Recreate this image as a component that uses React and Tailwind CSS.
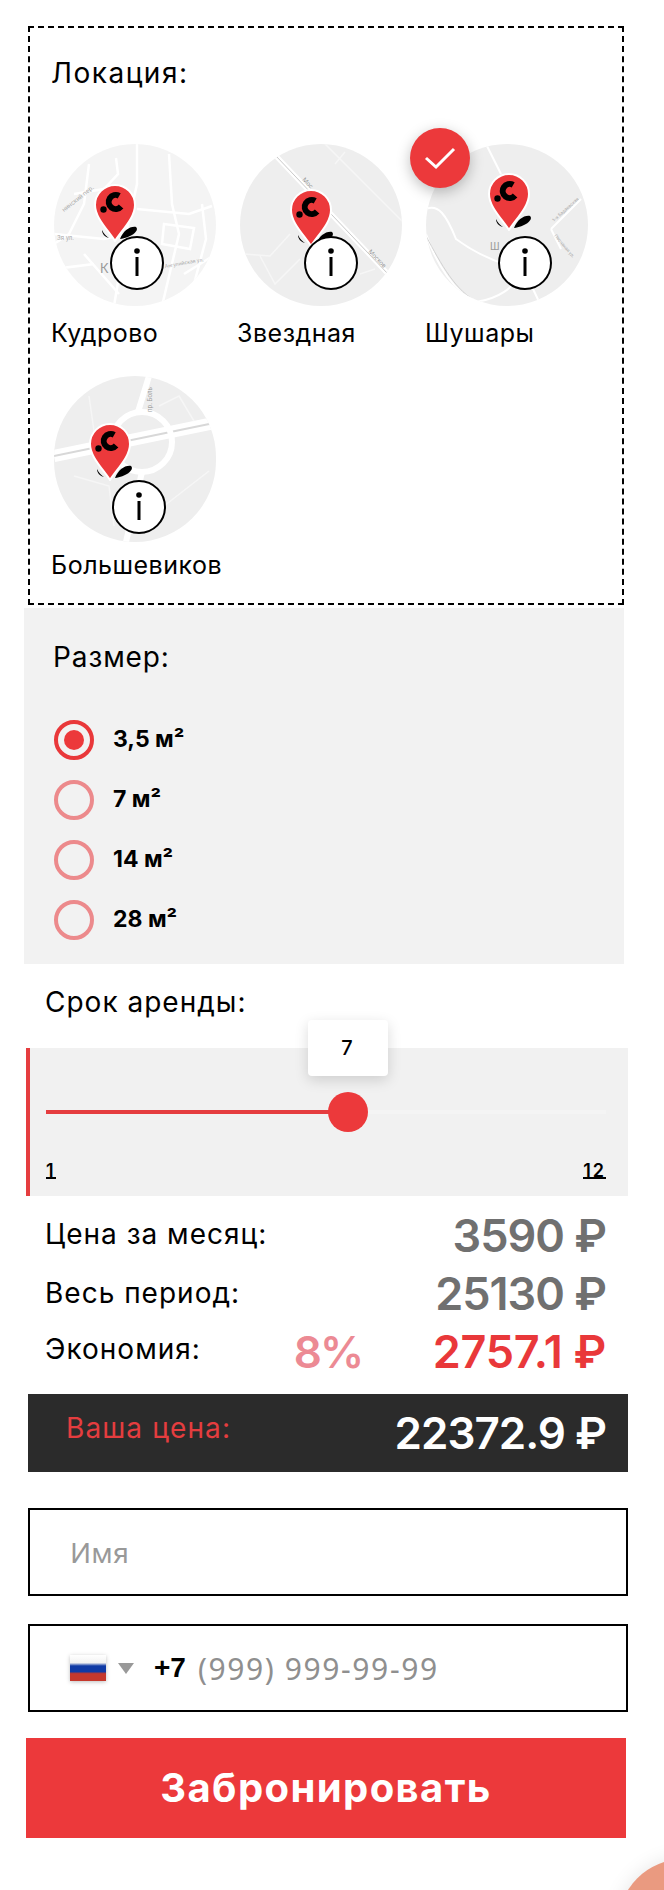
const RED = '#ec393b'

function Pin({ className }) {
  return (
    <svg className={className} width="46" height="58" viewBox="0 0 46 58" fill="none">
      <path d="M26 55C29 47 36 42 42 43C46 47 36 54 26 55Z" fill="#000" />
      <path d="M8 46C10 50 12 52 15 54C11 53 8 50 8 46Z" fill="#000" />
      <path d="M21 1C10 1 1 10 1 21C1 34 14 46 21 57C28 46 41 34 41 21C41 10 32 1 21 1Z" fill={RED} stroke="#fff" strokeWidth="2" />
      <circle cx="9.5" cy="25.5" r="3.2" fill="#000" />
      <path d="M27.1 22.5A7 7 0 1 1 25.2 11.9" stroke="#000" strokeWidth="6" />
    </svg>
  )
}

function InfoBadge({ className }) {
  return (
    <svg className={className} width="54" height="54" viewBox="0 0 54 54">
      <circle cx="27" cy="27" r="26" fill="#fff" stroke="#000" strokeWidth="2" />
      <circle cx="27" cy="15" r="2.8" fill="#000" />
      <rect x="25.5" y="21" width="3" height="19" fill="#000" />
    </svg>
  )
}

function MapKudrovo() {
  return (
    <svg className="w-full h-full" viewBox="0 0 162 162" fill="none">
      <rect width="162" height="162" fill="#f4f4f4" />
      <g stroke="#fff" strokeWidth="2.5">
        <path d="M83 0V40L72 90L60 162" />
        <path d="M115 10L118 60L125 90L108 162" />
        <path d="M35 20L30 60L15 90L0 100" />
        <path d="M62 14L64 30L50 45L20 50" />
        <path d="M83 65L135 70L158 62" />
        <path d="M110 80L140 84L136 105L108 100Z" />
        <path d="M0 90L50 95L72 90" />
        <path d="M30 110L65 150" />
        <path d="M130 130L162 110" />
        <path d="M0 125L40 120" />
        <path d="M148 60L152 95L140 140" />
      </g>
      <text x="10" y="68" fontSize="6" fill="#aaa" fontFamily="Inter, sans-serif" transform="rotate(-38 10 68)">нинский пер.</text>
      <text x="3" y="96" fontSize="6" fill="#aaa" fontFamily="Inter, sans-serif">Зя ул.</text>
      <text x="46" y="129" fontSize="13" fill="#999" fontFamily="Inter, sans-serif">К</text>
      <text x="111" y="124" fontSize="5" fill="#aaa" fontFamily="Inter, sans-serif" transform="rotate(-10 111 124)">Ангулийская ул.</text>
    </svg>
  )
}

function MapZvezdnaya() {
  return (
    <svg className="w-full h-full" viewBox="0 0 162 162" fill="none">
      <rect width="162" height="162" fill="#eeeeee" />
      <path d="M36 12L148 130" stroke="#fff" strokeWidth="5" />
      <path d="M36 12L148 130" stroke="#c9c9c9" strokeWidth="1" />
      <g stroke="#f6f6f6" strokeWidth="1.5">
        <path d="M85 0L165 80" />
        <path d="M105 8L95 20" />
        <path d="M5 110L30 112L50 90" />
        <path d="M20 112L35 140L60 115" />
        <path d="M120 130L135 125" />
      </g>
      <text x="62" y="36" fontSize="6" fill="#999" fontFamily="Inter, sans-serif" transform="rotate(46 62 36)">Мос</text>
      <text x="128" y="108" fontSize="6" fill="#999" fontFamily="Inter, sans-serif" transform="rotate(46 128 108)">Москов</text>
    </svg>
  )
}

function MapShushary() {
  return (
    <svg className="w-full h-full" viewBox="0 0 162 162" fill="none">
      <rect width="162" height="162" fill="#eeeeee" />
      <path d="M0 65C12 60 20 70 30 95C50 110 75 120 95 125C90 145 70 155 50 158C30 150 10 120 0 90" stroke="#fff" strokeWidth="2" />
      <path d="M0 92C15 120 30 148 52 158" stroke="#d2d2d2" strokeWidth="1" />
      <path d="M60 0L75 30M125 85L155 55M125 85L135 105M100 130L115 162" stroke="#fff" strokeWidth="2" />
      <text x="64" y="106" fontSize="10" fill="#999" fontFamily="Inter, sans-serif">Ш</text>
      <text x="128" y="78" fontSize="4.5" fill="#aaa" fontFamily="Inter, sans-serif" transform="rotate(-42 128 78)">1-я Бадаевская</text>
      <text x="128" y="92" fontSize="4.5" fill="#aaa" fontFamily="Inter, sans-serif" transform="rotate(50 128 92)">Песчаная ул.</text>
    </svg>
  )
}

function MapBolshevikov() {
  return (
    <svg className="w-full h-full" viewBox="0 0 162 166" fill="none">
      <rect width="162" height="166" fill="#eeeeee" />
      <path d="M0 80L160 47" stroke="#fff" strokeWidth="12" />
      <path d="M0 80L160 47" stroke="#d8d8d8" strokeWidth="2" />
      <circle cx="88" cy="66" r="30" stroke="#fff" strokeWidth="6" />
      <path d="M95 0L84 36M88 96L72 166" stroke="#fff" strokeWidth="6" />
      <path d="M35 20L40 55M20 100L55 110L60 150M110 130L155 95M105 30L125 20L140 45" stroke="#f6f6f6" strokeWidth="1.5" />
      <text x="98" y="36" fontSize="6" fill="#999" fontFamily="Inter, sans-serif" transform="rotate(-90 98 36)">пр. Боль</text>
    </svg>
  )
}

const locations = [
  { name: 'Кудрово', map: <MapKudrovo />, pin: 'left-[40px] top-[40px]', info: 'left-[56px] top-[92px]', label: 'ml-0' },
  { name: 'Звездная', map: <MapZvezdnaya />, pin: 'left-[50px] top-[45px]', info: 'left-[64px] top-[92px]', label: 'ml-0' },
  { name: 'Шушары', map: <MapShushary />, pin: 'left-[62px] top-[29px]', info: 'left-[72px] top-[92px]', label: 'ml-[2px]', check: true },
  { name: 'Большевиков', map: <MapBolshevikov />, pin: 'left-[35px] top-[47px]', info: 'left-[58px] top-[104px]', label: 'ml-0' },
]

function Location({ item, last }) {
  return (
    <div className="h-[232px]">
      <div className={`relative ml-[3px] w-[162px] ${last ? 'h-[166px]' : 'h-[162px]'}`}>
        <div className="w-full h-full rounded-full overflow-hidden">{item.map}</div>
        <Pin className={`absolute ${item.pin}`} />
        <InfoBadge className={`absolute ${item.info}`} />
        {item.check && (
          <div className="absolute -left-[16px] -top-[16px] w-[60px] h-[60px] rounded-full bg-[#ec393b] shadow-[0_4px_14px_rgba(0,0,0,0.25)] flex items-center justify-center">
            <svg width="32" height="24" viewBox="0 0 32 24" fill="none">
              <path d="M2 12L12 21L30 3" stroke="#fff" strokeWidth="3" />
            </svg>
          </div>
        )}
      </div>
      <div className={`${last ? 'mt-[8px]' : 'mt-[12px]'} ${item.label} text-[25px] leading-[30px] tracking-[0.5px] text-black`}>{item.name}</div>
    </div>
  )
}

function Radio({ label, checked }) {
  return (
    <div className="flex items-center h-[60px]">
      <div className={`w-[40px] h-[40px] rounded-full border-[4px] flex items-center justify-center ${checked ? 'border-[#e9383a]' : 'border-[#ec8a8c]'}`}>
        {checked && <div className="w-[20px] h-[20px] rounded-full bg-[#ec393b]" />}
      </div>
      <span className="ml-[19px] -mt-[2px] text-[23px] font-bold text-black">{label}</span>
    </div>
  )
}

function PriceRow({ label, value, color, extra, labelClass }) {
  return (
    <div className="flex items-center h-[58px]">
      <span className={`text-[28px] text-black tracking-[1px] ${labelClass}`}>{label}</span>
      {extra && <span className="ml-[93px] text-[44px] font-semibold text-[#ec8a94] tracking-[-2px]">{extra}</span>}
      <span className={`ml-auto text-[45px] ${color}`}>{value}</span>
    </div>
  )
}

export default function App() {
  return (
    <div className="relative h-[1890px] overflow-hidden bg-white font-['Inter',sans-serif] text-black">
      {/* локация */}
      <div className="ml-[28px] mt-[26px] w-[596px] h-[579px] border-2 border-dashed border-black pl-[21px] pt-[27px]">
        <h2 className="text-[28px] leading-[36px] font-normal tracking-[1.5px]">Локация:</h2>
        <div className="mt-[53px] grid grid-cols-[186px_186px_186px]">
          {locations.map((item, i) => (
            <Location key={item.name} item={item} last={i === 3} />
          ))}
        </div>
      </div>

      {/* размер */}
      <div className="ml-[24px] mt-[3px] w-[600px] h-[356px] bg-[#f2f2f2] pl-[29px] pt-[31px]">
        <h2 className="text-[28px] leading-[36px] font-normal tracking-[0.9px]">Размер:</h2>
        <div className="mt-[35px] ml-[1px]">
          <Radio label="3,5 м²" checked />
          <Radio label="7 м²" />
          <Radio label="14 м²" />
          <Radio label="28 м²" />
        </div>
      </div>

      {/* срок */}
      <div className="ml-[45px] mt-[20px] h-[36px] text-[28px] leading-[36px] tracking-[1px]">Срок аренды:</div>
      <div className="relative ml-[26px] mt-[28px] w-[602px] h-[148px] bg-[#f1f1f1] border-l-[4px] border-[#e53d3f] pl-[16px] pr-[22px] pt-[62px]">
        <div className="absolute left-[278px] -top-[28px] w-[80px] h-[56px] bg-white rounded-[4px] shadow-[0_4px_14px_rgba(0,0,0,0.15)] flex items-center justify-center pr-[2px] text-[20px] font-medium">7</div>
        <div className="relative h-[4px] bg-[#f4f4f4]">
          <div className="w-[302px] h-full bg-[#e53d3f]" />
          <div className="absolute left-[282px] -top-[18px] w-[40px] h-[40px] rounded-full bg-[#ec393b]" />
        </div>
        <div className="flex justify-between pt-[50px] text-[18px] font-semibold leading-[13px] tracking-[2px]">
          <span className="border-b-2 border-black">1</span>
          <span className="border-b-2 border-black">12</span>
        </div>
      </div>

      {/* цены */}
      <div className="ml-[46px] mt-[11px] w-[560px]">
        <PriceRow label="Цена за месяц:" value="3590 ₽" color="font-semibold tracking-[-1px] text-[#707070]" labelClass="-ml-[1px] -mt-[4px]" />
        <PriceRow label="Весь период:" value="25130 ₽" color="font-semibold tracking-[-1px] text-[#707070]" labelClass="-ml-[1px] -mt-[3px]" />
        <PriceRow label="Экономия:" value="2757.1 ₽" color="font-semibold tracking-[-0.3px] text-[#e9383a]" extra="8%" labelClass="-ml-[1px] -mt-[7px]" />
      </div>
      <div className="ml-[28px] mt-[13px] w-[600px] h-[78px] bg-[#2b2b2b] flex items-center pl-[38px] pr-[22px]">
        <span className="text-[28px] tracking-[1.1px] text-[#e53d3f] -mt-[11px]">Ваша цена:</span>
        <span className="ml-auto text-[44px] font-semibold tracking-[-1px] text-white">22372.9 ₽</span>
      </div>

      {/* форма */}
      <input
        placeholder="Имя"
        className="block ml-[28px] mt-[36px] w-[600px] h-[88px] border-2 border-black pl-[40px] text-[28px] font-['Noto_Sans',sans-serif] placeholder:text-[#999999] outline-none"
      />
      <div className="ml-[28px] mt-[28px] w-[600px] h-[88px] border-2 border-black flex items-center pl-[40px]">
        <div className="w-[36px] h-[26px] shadow-[0_1px_4px_rgba(0,0,0,0.25)] bg-[linear-gradient(#fff_0%,#f2f2f2_30%,#0f3aa5_42%,#0f3aa5_64%,#c5382c_72%,#c5382c_100%)]" />
        <div className="ml-[12px] w-0 h-0 border-x-[8px] border-x-transparent border-t-[11px] border-t-[#999999]" />
        <span className="ml-[20px] text-[28px] font-semibold font-['Liberation_Sans',sans-serif]">+7</span>
        <span className="ml-[12px] text-[30px] tracking-[1.6px] text-[#8f8f8f] font-['Noto_Sans',sans-serif]">(999) 999-99-99</span>
      </div>
      <button className="block ml-[26px] mt-[26px] w-[600px] h-[100px] bg-[#ec393b] text-white text-[40px] tracking-[1.4px] font-bold">Забронировать</button>

      {/* плавающая кнопка */}
      <div className="absolute left-[618px] top-[1859px] w-[132px] h-[132px] rounded-full bg-[#ea9a80] shadow-[0_0_20px_rgba(0,0,0,0.1)]" />
    </div>
  )
}
